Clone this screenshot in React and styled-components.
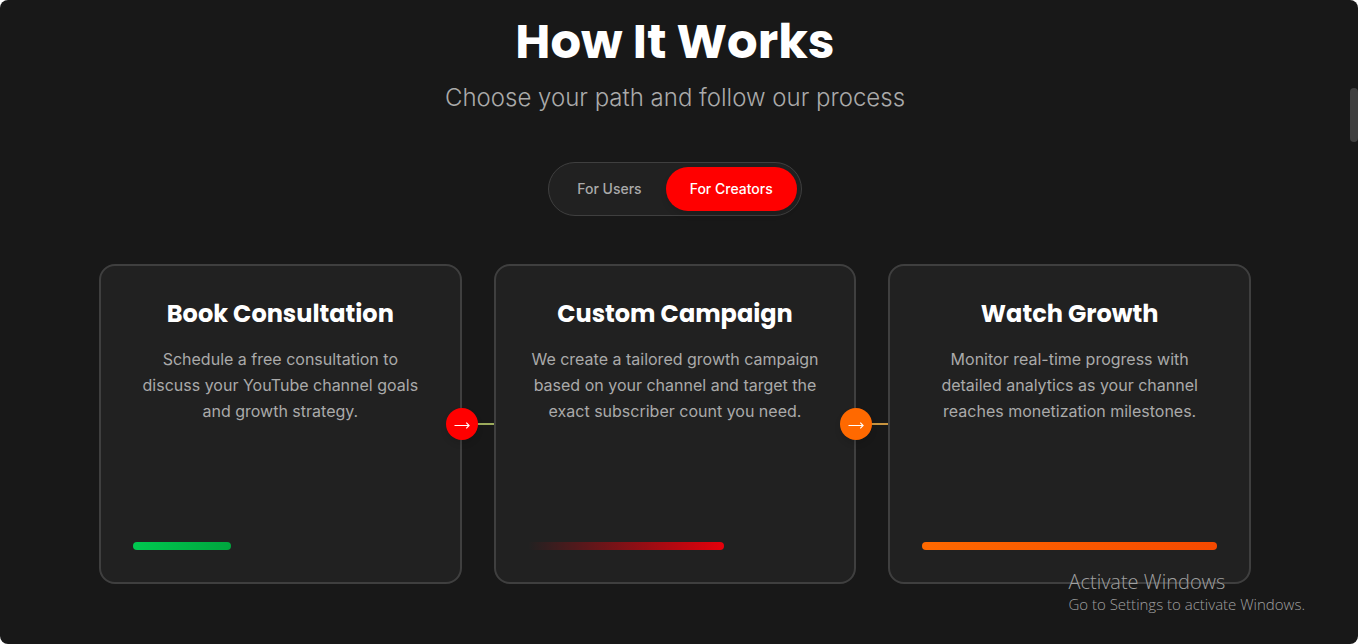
import React, { useState } from "react";
import styled, { createGlobalStyle } from "styled-components";

const steps = [
  {
    title: "Book Consultation",
    text: "Schedule a free consultation to discuss your YouTube channel goals and growth strategy.",
    bar: "linear-gradient(to right, #00c950, #00a63e)",
    arrow: "#ff0000",
    line: "#9cab5c",
  },
  {
    title: "Custom Campaign",
    text: "We create a tailored growth campaign based on your channel and target the exact subscriber count you need.",
    bar: "linear-gradient(to right, transparent, #e7000b)",
    arrow: "#ff6900",
    line: "#c8943f",
  },
  {
    title: "Watch Growth",
    text: "Monitor real-time progress with detailed analytics as your channel reaches monetization milestones.",
    bar: "linear-gradient(to right, #ff6900, #f54900)",
  },
];

const tabs = ["For Users", "For Creators"];

function App() {
  const [active, setActive] = useState("For Creators");

  return (
    <>
      <GlobalStyle />
      <Page>
        <Section>
          <Title>How It Works</Title>
          <Subtitle>Choose your path and follow our process</Subtitle>

          <Toggle>
            {tabs.map((tab) => (
              <ToggleButton
                key={tab}
                type="button"
                $active={active === tab}
                aria-pressed={active === tab}
                onClick={() => setActive(tab)}
              >
                {tab}
              </ToggleButton>
            ))}
          </Toggle>

          <Steps>
            {steps.map((step, index) => (
              <Card key={step.title}>
                <CardTitle>{step.title}</CardTitle>
                <CardText>{step.text}</CardText>
                <Progress
                  $fill={step.bar}
                  style={{ width: `${((index + 1) / steps.length) * 100}%` }}
                />
                {step.arrow && (
                  <>
                    <Connector $color={step.line} />
                    <Arrow $color={step.arrow}>
                      <svg width="16" height="16" viewBox="0 0 16 16" fill="none" aria-hidden="true">
                        <path
                          d="M0.5 9.5H15M12.3 6.7L15.1 9.5L12.3 12.3"
                          stroke="currentColor"
                          strokeWidth="1.1"
                        />
                      </svg>
                    </Arrow>
                  </>
                )}
              </Card>
            ))}
          </Steps>
        </Section>

        {/* Scroll rail */}
        <Rail>
          <Thumb />
        </Rail>

        <Watermark>
          <WatermarkTitle>Activate Windows</WatermarkTitle>
          <WatermarkText>Go to Settings to activate Windows.</WatermarkText>
        </Watermark>
      </Page>
    </>
  );
}

const GlobalStyle = createGlobalStyle`
  * {
    box-sizing: border-box;
  }

  body {
    margin: 0;
    background: #fff;
    font-family: Inter, "Liberation Sans", sans-serif;
  }
`;

const Page = styled.div`
  position: relative;
  display: flex;
  min-height: 100vh;
  background: #181818;
  border-radius: 8px;
  overflow: hidden;
`;

const Section = styled.section`
  flex: 1;
  display: flex;
  flex-direction: column;
  align-items: center;
  padding: 18px 24px 48px;
`;

const Title = styled.h2`
  margin: 0 0 16px;
  color: #fff;
  font-family: Poppins, Inter, sans-serif;
  font-size: 48px;
  font-weight: 700;
  line-height: 48px;
  text-align: center;
`;

const Subtitle = styled.p`
  margin: 0 0 48px;
  color: #aaa;
  font-size: 24px;
  font-weight: 300;
  line-height: 32px;
  text-align: center;
`;

const Toggle = styled.div`
  display: flex;
  margin-bottom: 48px;
  padding: 4px;
  border: 1px solid #3f3f3f;
  border-radius: 27px;
  background: #212121;
`;

const ToggleButton = styled.button`
  padding: 12px 24px;
  border: none;
  border-radius: 22px;
  background: ${({ $active }) => ($active ? "#ff0000" : "transparent")};
  color: ${({ $active }) => ($active ? "#fff" : "#aaa")};
  box-shadow: ${({ $active }) =>
    $active ? "0 4px 6px rgba(0, 0, 0, 0.1)" : "none"};
  font-family: inherit;
  font-size: 14px;
  font-weight: 500;
  line-height: 20px;
  cursor: pointer;
`;

const Steps = styled.div`
  display: grid;
  grid-template-columns: repeat(3, 1fr);
  gap: 32px;
  width: 100%;
  max-width: 1152px;
`;

const Card = styled.article`
  position: relative;
  display: flex;
  flex-direction: column;
  min-height: 320px;
  padding: 32px;
  border: 2px solid #3f3f3f;
  border-radius: 16px;
  background: #212121;
  text-align: center;
`;

const CardTitle = styled.h3`
  margin: 0 0 16px;
  color: #fff;
  font-family: Poppins, Inter, sans-serif;
  font-size: 24px;
  font-weight: 700;
  line-height: 32px;
`;

const CardText = styled.p`
  margin: 0 0 24px;
  color: #aaa;
  font-size: 16px;
  line-height: 26px;
`;

const Progress = styled.div`
  height: 8px;
  margin-top: auto;
  border-radius: 4px;
  background: ${({ $fill }) => $fill};
`;

/* Sits in the gap between two cards */
const Connector = styled.span`
  position: absolute;
  top: 50%;
  right: -34px;
  width: 32px;
  height: 2px;
  margin-top: -1px;
  background: ${({ $color }) => $color};
`;

const Arrow = styled.span`
  position: absolute;
  top: 50%;
  right: -18px;
  display: flex;
  align-items: center;
  justify-content: center;
  width: 32px;
  height: 32px;
  margin-top: -16px;
  border-radius: 50%;
  background: ${({ $color }) => $color};
  box-shadow: 0 4px 6px rgba(0, 0, 0, 0.1);
  color: #fff;
  z-index: 1;
`;

const Rail = styled.div`
  width: 8px;
  padding-top: 88px;
`;

const Thumb = styled.div`
  height: 54px;
  border-radius: 4px;
  background: #3f3f3f;
`;

const Watermark = styled.div`
  position: absolute;
  right: 53px;
  bottom: 30px;
  color: #a0a0a0;
  font-family: "Open Sans", "Noto Sans", sans-serif;
  font-weight: 300;
  pointer-events: none;
`;

const WatermarkTitle = styled.p`
  margin: 0;
  font-size: 20px;
  line-height: 24px;
`;

const WatermarkText = styled.p`
  margin: 0;
  font-size: 15px;
  line-height: 20px;
`;

export default App;
